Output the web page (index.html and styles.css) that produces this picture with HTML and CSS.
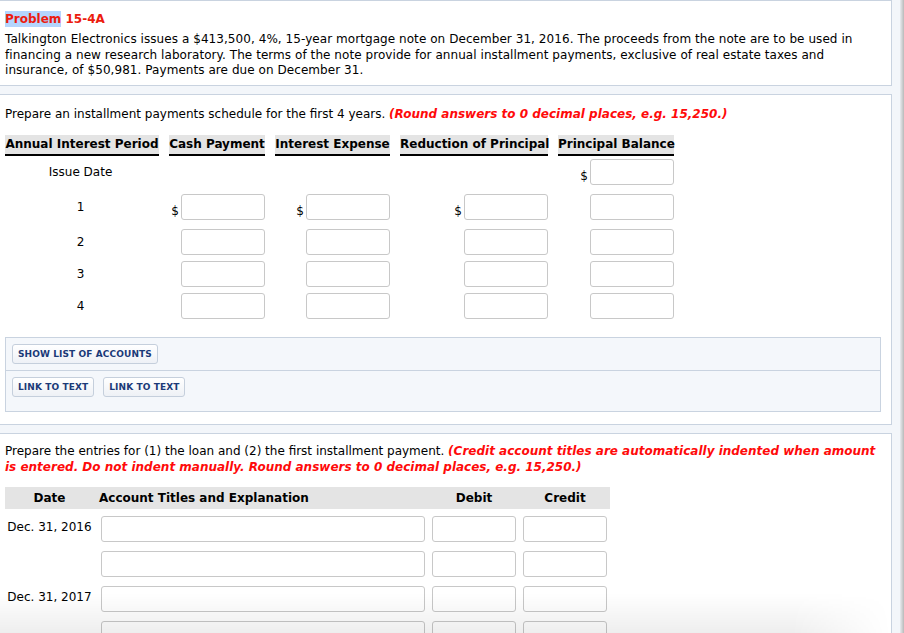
FILE: index.html
```html
<!DOCTYPE html>
<html>
<head>
<meta charset="utf-8">
<link rel="stylesheet" href="styles.css">
</head>
<body>
<div class="page">
  <div class="panel p1">
    <div class="title"><span class="sel">Problem</span> 15-4A</div>
    <p class="intro">Talkington Electronics issues a $413,500, 4%, 15-year mortgage note on December 31, 2016. The proceeds from the note are to be used in financing a new research laboratory. The terms of the note provide for annual installment payments, exclusive of real estate taxes and insurance, of $50,981. Payments are due on December 31.</p>
  </div>

  <div class="panel p2">
    <p class="instr">Prepare an installment payments schedule for the first 4 years. <em class="red">(Round answers to 0 decimal places, e.g. 15,250.)</em></p>
    <div class="sched">
      <div class="srow shead">
        <div class="hc">Annual Interest Period</div>
        <div class="hc">Cash Payment</div>
        <div class="hc">Interest Expense</div>
        <div class="hc">Reduction of Principal</div>
        <div class="hc">Principal Balance</div>
      </div>
      <div class="srow r-issue">
        <div class="lab">Issue Date</div>
        <div class="cell"></div>
        <div class="cell"></div>
        <div class="cell"></div>
        <div class="cell"><span class="dol">$</span><input class="num" type="text"></div>
      </div>
      <div class="srow r1">
        <div class="lab">1</div>
        <div class="cell"><span class="dol">$</span><input class="num" type="text"></div>
        <div class="cell"><span class="dol">$</span><input class="num" type="text"></div>
        <div class="cell"><span class="dol">$</span><input class="num" type="text"></div>
        <div class="cell"><input class="num" type="text"></div>
      </div>
      <div class="srow r2">
        <div class="lab">2</div>
        <div class="cell"><input class="num" type="text"></div>
        <div class="cell"><input class="num" type="text"></div>
        <div class="cell"><input class="num" type="text"></div>
        <div class="cell"><input class="num" type="text"></div>
      </div>
      <div class="srow r3">
        <div class="lab">3</div>
        <div class="cell"><input class="num" type="text"></div>
        <div class="cell"><input class="num" type="text"></div>
        <div class="cell"><input class="num" type="text"></div>
        <div class="cell"><input class="num" type="text"></div>
      </div>
      <div class="srow r3">
        <div class="lab">4</div>
        <div class="cell"><input class="num" type="text"></div>
        <div class="cell"><input class="num" type="text"></div>
        <div class="cell"><input class="num" type="text"></div>
        <div class="cell"><input class="num" type="text"></div>
      </div>
    </div>

    <div class="tools">
      <div class="tsec first"><button class="btn">SHOW LIST OF ACCOUNTS</button></div>
      <div class="tsec second"><button class="btn">LINK TO TEXT</button><button class="btn">LINK TO TEXT</button></div>
    </div>
  </div>

  <div class="panel p3">
    <p class="instr">Prepare the entries for (1) the loan and (2) the first installment payment. <em class="red">(Credit account titles are automatically indented when amount is entered. Do not indent manually. Round answers to 0 decimal places, e.g. 15,250.)</em></p>
    <div class="journal">
      <div class="jrow jhead">
        <div class="jh">Date</div>
        <div class="jh acct">Account Titles and Explanation</div>
        <div class="jh">Debit</div>
        <div class="jh">Credit</div>
      </div>
      <div class="jrow jfirst">
        <div class="jdate">Dec. 31, 2016</div>
        <input class="txt" type="text">
        <input class="amt" type="text">
        <input class="amt" type="text">
      </div>
      <div class="jrow">
        <div class="jdate"></div>
        <input class="txt" type="text">
        <input class="amt" type="text">
        <input class="amt" type="text">
      </div>
      <div class="jrow">
        <div class="jdate">Dec. 31, 2017</div>
        <input class="txt" type="text">
        <input class="amt" type="text">
        <input class="amt" type="text">
      </div>
      <div class="jrow">
        <div class="jdate"></div>
        <input class="txt" type="text">
        <input class="amt" type="text">
        <input class="amt" type="text">
      </div>
    </div>
  </div>
</div>
<div class="fade"></div>
<div class="edge"></div>
</body>
</html>
```

FILE: styles.css
```css
html, body {
  margin: 0;
  padding: 0;
  background: #f3f6fa;
  height: 100%;
  overflow: hidden;
}
body {
  font-family: "DejaVu Sans", Verdana, sans-serif;
  font-size: 12px;
  color: #000;
}
.page {
  width: 893px;
  margin-left: -1px;
}
.panel {
  background: #fff;
  border: 1px solid #c9d3e0;
  padding: 0 4px 0 5px;
  margin-bottom: 8px;
}
.p1 {
  padding-top: 10px;
  padding-bottom: 6px;
}
.title {
  color: #ec1c0e;
  font-weight: bold;
  font-size: 12px;
  line-height: 16px;
}
.sel {
  background: #b4d5fd;
  padding: 1px 0;
}
.intro {
  margin: 5px 0 0;
  line-height: 15.5px;
  letter-spacing: 0.06px;
}
.p2 {
  padding-top: 11px;
  padding-bottom: 12px;
}
.instr {
  margin: 0;
  line-height: 16px;
}
.red {
  color: #ff0a0a;
  font-weight: bold;
  font-style: italic;
}
.sched {
  margin-top: 13px;
}
.srow {
  display: grid;
  grid-template-columns: 154px 96px 115px 148px 116px;
  column-gap: 10px;
}
.hc {
  background: #e4e4e4;
  border-bottom: 2px solid #000;
  height: 19px;
  line-height: 19px;
  font-weight: bold;
  text-align: center;
  white-space: nowrap;
}
.lab {
  display: flex;
  align-items: center;
  justify-content: center;
  padding-right: 3px;
}
.cell {
  display: flex;
  justify-content: flex-end;
  align-items: flex-end;
}
.dol {
  font-size: 12px;
  line-height: 12px;
  margin: 0 2px 3px 0;
}
.num, .txt, .amt {
  box-sizing: border-box;
  height: 26px;
  border: 1px solid #c8c8c8;
  border-radius: 3px;
  background: #fff;
  margin: 0;
  padding: 0 4px;
  font-family: inherit;
  font-size: 12px;
}
.num {
  width: 84px;
}
.r-issue { margin-top: 3px; }
.r1 { margin-top: 9px; }
.r2 { margin-top: 9px; }
.r3 { margin-top: 6px; }

.tools {
  margin-top: 18px;
  border: 1px solid #c9d3e0;
  background: #f4f7fb;
  width: 874px;
}
.tsec {
  display: flex;
  gap: 9px;
  padding: 6px 6px;
}
.tsec.first {
  border-bottom: 1px solid #c9d3e0;
  height: 20px;
}
.tsec.second {
  padding-bottom: 14px;
}
.btn {
  height: 20px;
  padding: 0 5px;
  border: 1px solid #c5cfdc;
  border-radius: 3px;
  background: linear-gradient(#ffffff, #eef1f6);
  color: #1b3a78;
  font-family: "DejaVu Sans", Verdana, sans-serif;
  font-weight: bold;
  font-size: 9px;
  letter-spacing: 0.1px;
  line-height: 18px;
}
.p3 {
  padding-top: 9px;
  padding-bottom: 20px;
}
.journal {
  margin-top: 12px;
}
.jrow {
  display: grid;
  grid-template-columns: 89px 324px 84px 84px;
  column-gap: 7px;
  margin-top: 9px;
}
.jhead {
  margin-top: 0;
  background: #e4e4e4;
  width: 605px;
  height: 22px;
  align-items: center;
}
.jfirst {
  margin-top: 7px;
}
.jh {
  font-weight: bold;
  text-align: center;
  white-space: nowrap;
}
.jh.acct {
  text-align: left;
  margin-left: -2px;
}
.jdate {
  text-align: center;
  padding-top: 4px;
  white-space: nowrap;
}
.txt {
  width: 324px;
}
.amt {
  width: 84px;
}
.fade {
  position: fixed;
  left: 0;
  bottom: 0;
  width: 900px;
  height: 40px;
  pointer-events: none;
  background: linear-gradient(rgba(0,0,0,0), rgba(0,0,0,0.065));
  -webkit-mask-image: linear-gradient(to right, #000 88%, transparent 99%);
  mask-image: linear-gradient(to right, #000 88%, transparent 99%);
}
.edge {
  position: fixed;
  top: 0;
  right: 0;
  width: 4px;
  height: 100%;
  background: linear-gradient(to right, #e9ecf0, #b9b9b9);
}
```
